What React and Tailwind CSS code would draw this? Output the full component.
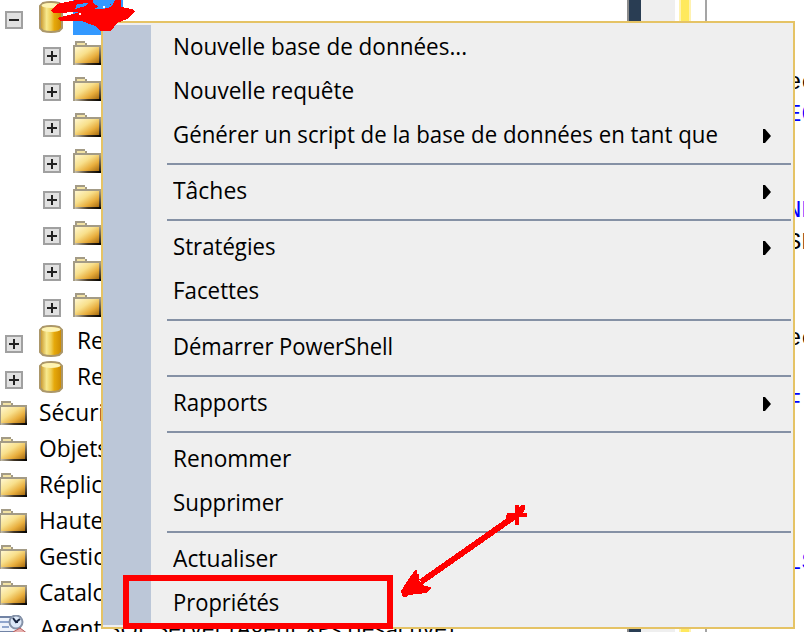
const groups = [
  [
    { label: 'Nouvelle base de données...', fit: 'scale-x-[0.937]' },
    { label: 'Nouvelle requête', fit: 'scale-x-[0.94]' },
    { label: 'Générer un script de la base de données en tant que', fit: 'scale-x-[0.927]', sub: true },
  ],
  [{ label: 'Tâches', fit: 'scale-x-[0.955]', sub: true }],
  [
    { label: 'Stratégies', fit: 'scale-x-[0.925]', sub: true },
    { label: 'Facettes', fit: 'scale-x-[0.93]' },
  ],
  [{ label: 'Démarrer PowerShell', fit: 'scale-x-[0.918]' }],
  [{ label: 'Rapports', fit: 'scale-x-[0.93]', sub: true }],
  [
    { label: 'Renommer', fit: 'scale-x-[0.945]' },
    { label: 'Supprimer', fit: 'scale-x-[0.93]' },
  ],
  [
    { label: 'Actualiser', fit: 'scale-x-[0.95]' },
    { label: 'Propriétés', fit: 'scale-x-[0.915]' },
  ],
];

function Expander({ open }) {
  return (
    <svg className="block h-[18px] w-[18px] shrink-0" viewBox="0 0 18 18" shapeRendering="crispEdges">
      <rect x="1" y="1" width="16" height="16" fill="#e1e1e1" stroke="#a0a0a0" strokeWidth="2" />
      <path d={open ? 'M4 9H14' : 'M4 9H14M9 4V14'} stroke="#222" strokeWidth="2" />
    </svg>
  );
}

function Folder() {
  return (
    <svg className="mt-[3px] block h-6 w-7 shrink-0 self-start" viewBox="0 0 28 24" shapeRendering="crispEdges">
      <path d="M2 0H12V2H14V4H28V22H2V24H0V4H2Z" fill="#a39b86" />
      <path d="M4 2H12V4H4Z" fill="#f3e3a4" />
      <path d="M2 6H26V22H2Z" fill="url(#folderFill)" />
      <path d="M26 6H28V24H26Z" fill="url(#folderSide)" />
      <path d="M2 22H28V24H2Z" fill="url(#folderEdge)" />
    </svg>
  );
}

function Cylinder() {
  return (
    <svg className="-mt-px block h-8 w-6 shrink-0 self-start" viewBox="0 0 24 32">
      <path d="M1 5L4 2Q12 0 20 2L23 5V27L20 30Q12 32 4 30L1 27Z" fill="url(#cylFill)" stroke="#ab976a" strokeWidth="2" />
      <ellipse cx="12" cy="4.5" rx="9.5" ry="2.6" fill="#fdf3b4" />
    </svg>
  );
}

function AgentIcon() {
  return (
    <svg className="mt-px block h-8 w-7 shrink-0 self-start" viewBox="0 0 28 32">
      <path d="M0 2H20V17H0" fill="#eef3fb" stroke="#7183a5" strokeWidth="2" />
      <path d="M0 7H10M2 12H9" stroke="#90a6cd" strokeWidth="2" />
      <circle cx="16" cy="7" r="6.5" fill="#dce8f8" stroke="#8592a8" strokeWidth="2" />
      <path d="M13 3L16 7L20 4M16 7H18" fill="none" stroke="#17243f" strokeWidth="2" />
      <path d="M13 17L20 13L28 19" fill="#e7b0ad" stroke="#b75c5c" />
    </svg>
  );
}

function TreeLabel({ children }) {
  return <span className="origin-left scale-x-[0.95] whitespace-nowrap pb-[9px] leading-[27px]">{children}</span>;
}

function Tree() {
  return (
    <div className="w-[627px] shrink-0 pt-0.5">
      <div className="flex h-9 items-center pl-[5px]">
        <Expander open />
        <div className="ml-4 self-start"><Cylinder /></div>
        <div className="ml-[10px] h-[35px] w-[50px] self-start bg-[#3399ff] -mt-0.5" />
      </div>
      {Array.from({ length: 8 }, (_, i) => (
        <div key={i} className="flex h-9 items-center pl-[43px]">
          <Expander />
          <div className="ml-3 self-start"><Folder /></div>
        </div>
      ))}
      {['ReportServer', 'ReportServerTempDB'].map((name) => (
        <div key={name} className="flex h-9 items-center pl-[5px]">
          <Expander />
          <div className="ml-4 mr-[14px] self-start"><Cylinder /></div>
          <TreeLabel>{name}</TreeLabel>
        </div>
      ))}
      {['Sécurité', 'Objets serveur', 'Réplication', 'Haute disponibilité', 'Gestion', 'Catalogues'].map((name) => (
        <div key={name} className="flex h-9 items-center">
          <div className="-ml-px mr-3 self-start"><Folder /></div>
          <TreeLabel>{name}</TreeLabel>
        </div>
      ))}
      <div className="flex h-9 items-center">
        <div className="mr-3 self-start"><AgentIcon /></div>
        <TreeLabel>Agent SQL Server (Agent XPs désactivé)</TreeLabel>
      </div>
    </div>
  );
}

function Editor() {
  return (
    <div className="flex h-[632px] w-[177px] shrink-0">
      <div className="w-0.5 shrink-0 bg-[#8b8b8b]" />
      <div className="w-3 shrink-0 bg-[#293d53]" />
      <div className="w-[34px] shrink-0 bg-[#efefef]" />
      <div className="ml-1 w-3 shrink-0 border-x-2 border-[#fff2b0] bg-[#ffe95e]" />
      <div className="ml-[14px] w-0.5 shrink-0 bg-[#a5a5a5]" />
      <div className="flex shrink-0 flex-col items-start pl-[80px] pt-[67px] font-['Liberation_Mono',monospace] text-[24px] leading-[32px]">
        <span className="h-8">ec</span>
        <span className="h-24 text-[#0000ff]">EC</span>
        <span className="h-8 text-[#0000ff]">NE</span>
        <span className="h-24">SE</span>
        <span className="h-16">ec</span>
        <span className="h-40 text-[#0000ff]">F</span>
        <span className="text-[#0000ff]">LS</span>
      </div>
    </div>
  );
}

function Menu() {
  return (
    <div className="absolute left-[101px] top-[21px] h-[608px] w-[694px] border-2 border-[#e5c365] bg-[#efefef] py-0.5">
      <div className="h-[600px] border-l-[48px] border-[#bcc7d8]">
        {groups.map((items, g) => (
          <div key={g}>
            {g > 0 && <div className="ml-4 mr-0.5 h-3 pt-1.5"><div className="h-0.5 bg-[#8591a5]" /></div>}
            {items.map(({ label, fit, sub }) => (
              <div key={label} className="flex h-11 items-start justify-between pl-[22px] pr-[22px]">
                <span className={`origin-left whitespace-nowrap leading-[42px] ${fit}`}>{label}</span>
                {sub && <svg className="mt-4 h-[14px] w-2" viewBox="0 0 8 14"><path d="M0 0H2L8 7L2 14H0Z" /></svg>}
              </div>
            ))}
          </div>
        ))}
      </div>
    </div>
  );
}

function Annotations() {
  return (
    <svg className="absolute left-0 top-0 h-[632px] w-[804px]" viewBox="0 0 804 632" shapeRendering="crispEdges">
      <rect x="126" y="578" width="264" height="48" fill="none" stroke="#f00" strokeWidth="6" />
      <path d="M518 514L421 582" stroke="#f00" strokeWidth="6" />
      <path d="M401 591L408 580L415 570H417V574H419V580L424 586L431 587V589L426 593L408 595L406 597H403Z" fill="#f00" />
      <path d="M507 513H515V505H519V507L521 505H525V509L523 513H527V517H519V525H515V517L505 521Z" fill="#f00" />
      <path d="M51 10L57 4L76 0H121V7L132 9L135 12L127 19L117 23L111 31H101L95 26L82 21H60L57 18L73 14L80 12L53 13Z" fill="#f00" />
      <path d="M77 4L88 3L86 6L75 9ZM95 8L103 6L113 4L111 7L103 9H95ZM93 0H115L113 4L106 5L103 8L99 7L93 3Z" fill="#39f" />
      <path d="M79 13H81V15H79ZM103 6H105V8H103Z" fill="#fff" />
    </svg>
  );
}

export default function App() {
  return (
    <div className="relative flex h-[632px] w-[804px] overflow-hidden bg-white font-['Open_Sans','Noto_Sans',sans-serif] text-[24px] text-black">
      <svg className="absolute h-0 w-0">
        <defs>
          <linearGradient id="folderFill" x1="0" y1="0" x2="1" y2="1">
            <stop offset="0" stopColor="#fff7cf" /><stop offset=".4" stopColor="#f8e08c" /><stop offset=".7" stopColor="#e8ad3c" /><stop offset="1" stopColor="#a86c10" />
          </linearGradient>
          <linearGradient id="folderEdge">
            <stop offset="0" stopColor="#c4bda9" /><stop offset=".5" stopColor="#413525" /><stop offset="1" stopColor="#000" />
          </linearGradient>
          <linearGradient id="folderSide" x1="0" y1="0" x2="0" y2="1">
            <stop offset="0" stopColor="#a39b86" /><stop offset="1" stopColor="#1a120a" />
          </linearGradient>
          <linearGradient id="cylFill">
            <stop offset="0" stopColor="#c28e24" /><stop offset=".3" stopColor="#f8e98e" /><stop offset=".5" stopColor="#efce55" /><stop offset=".65" stopColor="#e6a90b" /><stop offset="1" stopColor="#c98700" />
          </linearGradient>
        </defs>
      </svg>
      <Tree />
      <Editor />
      <Menu />
      <Annotations />
    </div>
  );
}
